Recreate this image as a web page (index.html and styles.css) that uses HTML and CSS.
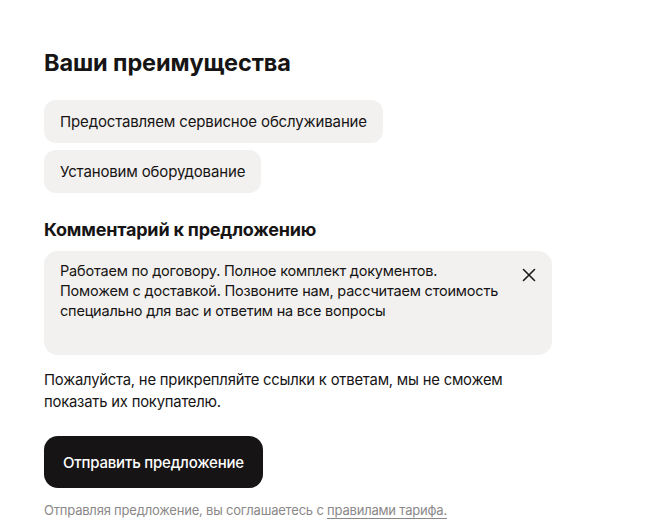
FILE: index.html
```html
<!DOCTYPE html>
<html lang="ru">
<head>
<meta charset="utf-8">
<link rel="stylesheet" href="styles.css">
</head>
<body>
<main class="page">
  <h1 class="title">Ваши преимущества</h1>
  <div class="chips">
    <span class="chip">Предоставляем сервисное обслуживание</span>
    <span class="chip">Установим оборудование</span>
  </div>
  <h2 class="subtitle">Комментарий к предложению</h2>
  <div class="field">
    <p class="field-text">Работаем по договору. Полное комплект документов. Поможем с доставкой. Позвоните нам, рассчитаем стоимость специально для вас и ответим на все вопросы</p>
    <svg class="clear" width="14" height="14" viewBox="0 0 14 14" aria-hidden="true"><path d="M1.5 1.5 L12.5 12.5 M12.5 1.5 L1.5 12.5" stroke="#1a1a1a" stroke-width="1.6" stroke-linecap="round" fill="none"/></svg>
  </div>
  <p class="note">Пожалуйста, не прикрепляйте ссылки к ответам, мы не сможем показать их покупателю.</p>
  <button class="submit">Отправить предложение</button>
  <p class="legal">Отправляя предложение, вы соглашаетесь с <a class="legal-link" href="#">правилами тарифа.</a></p>
</main>
</body>
</html>
```

FILE: styles.css
```css
* { box-sizing: border-box; }
html, body { margin: 0; padding: 0; background: #fff; }
body {
  font-family: Inter, "Noto Sans", "Liberation Sans", sans-serif;
  color: #161414;
}
.page {
  width: 508px;
  margin-left: 44px;
  padding-top: 48px;
  display: flex;
  flex-direction: column;
  align-items: flex-start;
}
.title {
  margin: 0;
  font-size: 23.5px;
  line-height: 30px;
  font-weight: 700;
  letter-spacing: -0.1px;
}
.chips {
  margin-top: 22px;
  display: flex;
  flex-direction: column;
  align-items: flex-start;
  gap: 7px;
}
.chip {
  background: #f2f1ef;
  border-radius: 12px;
  padding: 0 16px;
  height: 43px;
  display: flex;
  align-items: center;
  font-size: 15px;
  letter-spacing: -0.15px;
}
.subtitle {
  margin: 25px 0 0;
  font-size: 18px;
  line-height: 24px;
  font-weight: 700;
  letter-spacing: -0.2px;
}
.field {
  margin-top: 9px;
  width: 508px;
  height: 104px;
  background: #f2f1ef;
  border-radius: 14px;
  padding: 10px 16px 0 16px;
  display: flex;
  align-items: flex-start;
  justify-content: space-between;
}
.field-text {
  margin: 0;
  width: 442px;
  flex: none;
  font-size: 14.5px;
  line-height: 20px;
  letter-spacing: -0.2px;
}
.clear { margin-top: 7px; flex: none; }
.note {
  margin: 14px 0 0;
  font-size: 14.8px;
  line-height: 22px;
  letter-spacing: -0.2px;
}
.submit {
  margin-top: 23px;
  height: 52px;
  padding: 0 19px;
  background: #161414;
  color: #fff;
  border: none;
  border-radius: 14px;
  font-family: inherit;
  font-size: 15px;
  font-weight: 500;
  letter-spacing: -0.2px;
}
.legal {
  margin: 13px 0 0;
  font-size: 13px;
  line-height: 18px;
  color: #8a8888;
  letter-spacing: -0.2px;
}
.legal-link { color: #8a8888; text-decoration: underline; text-underline-offset: 3px; }
```
